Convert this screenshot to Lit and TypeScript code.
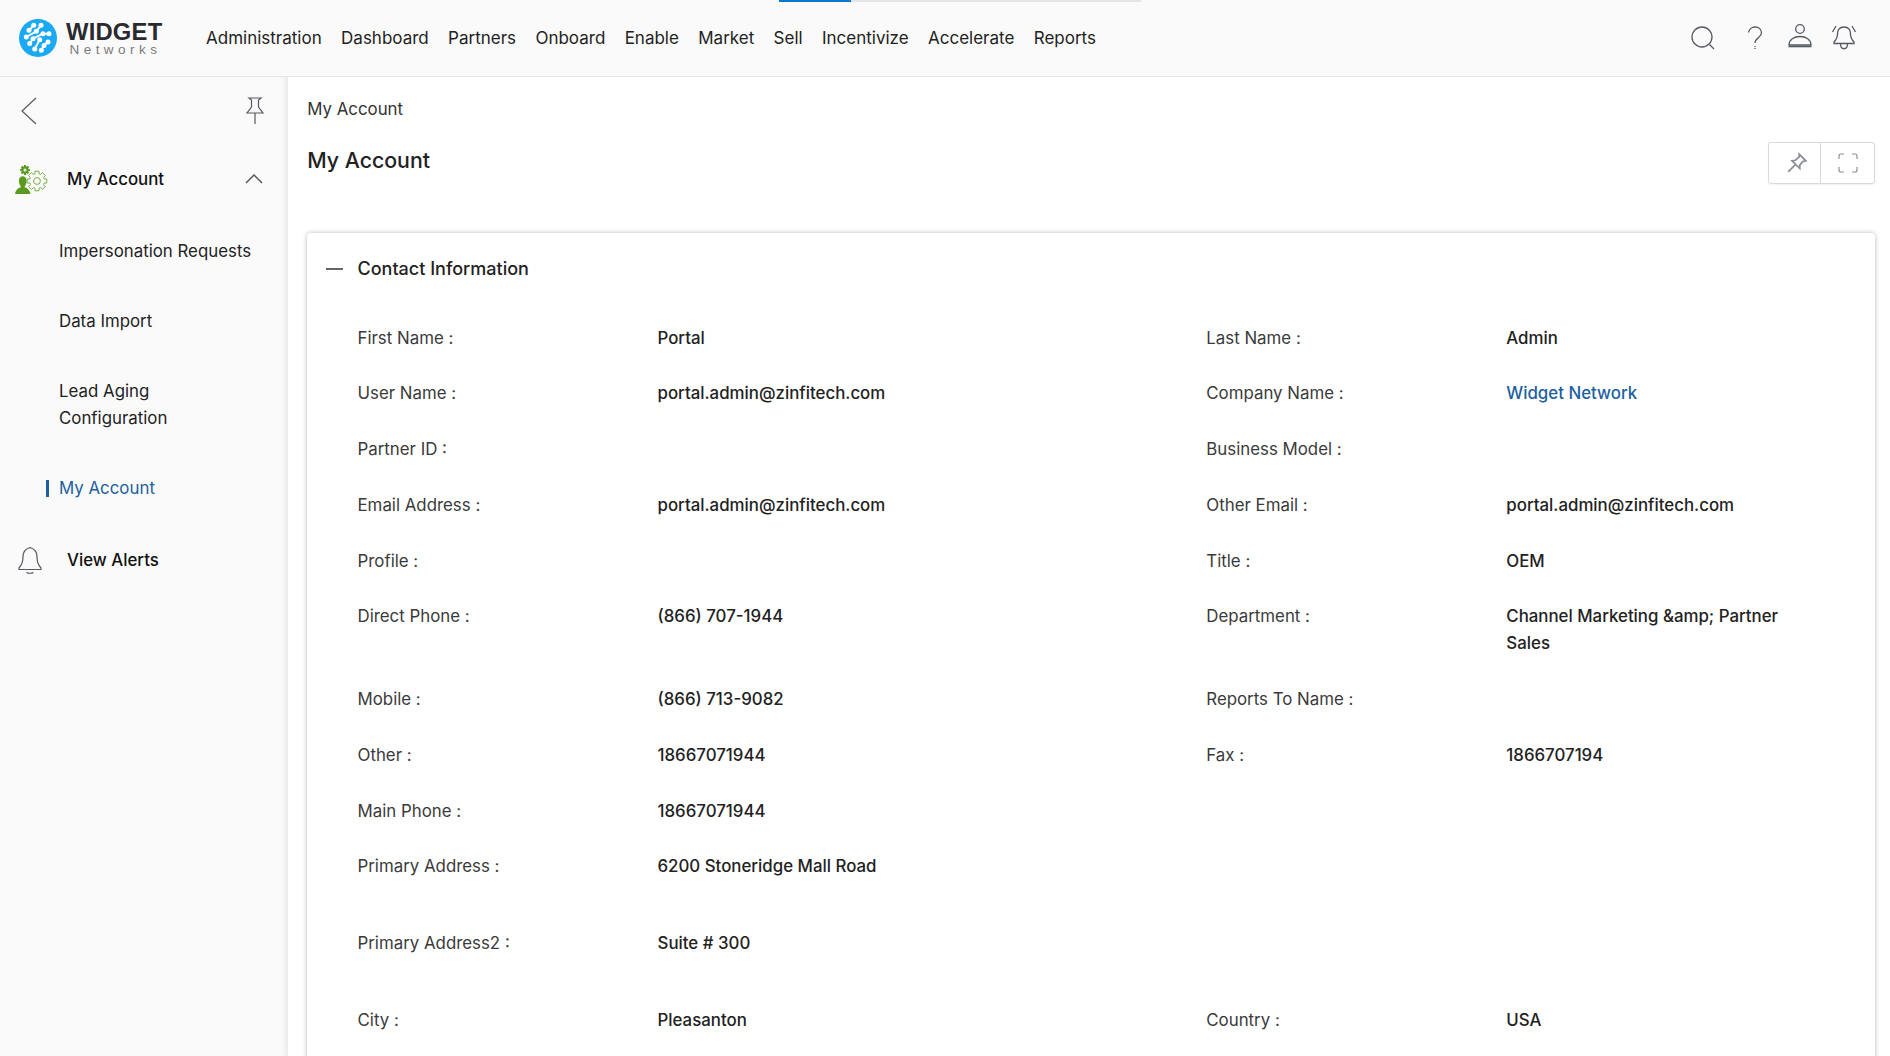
import { LitElement, html, css, svg } from "lit";
import { customElement } from "lit/decorators.js";

type Row = { l1: string; v1?: string; l2?: string; v2?: string; link?: boolean; cls?: string };

const rows: Row[] = [
  { l1: "First Name :", v1: "Portal", l2: "Last Name :", v2: "Admin" },
  { l1: "User Name :", v1: "portal.admin@zinfitech.com", l2: "Company Name :", v2: "Widget Network", link: true },
  { l1: "Partner ID :", l2: "Business Model :" },
  { l1: "Email Address :", v1: "portal.admin@zinfitech.com", l2: "Other Email :", v2: "portal.admin@zinfitech.com" },
  { l1: "Profile :", l2: "Title :", v2: "OEM" },
  { l1: "Direct Phone :", v1: "(866) 707-1944", l2: "Department :", v2: "Channel Marketing &amp; Partner Sales" },
  { l1: "Mobile :", v1: "(866) 713-9082", l2: "Reports To Name :" },
  { l1: "Other :", v1: "18667071944", l2: "Fax :", v2: "1866707194" },
  { l1: "Main Phone :", v1: "18667071944" },
  { l1: "Primary Address :", v1: "6200 Stoneridge Mall Road", cls: "tall" },
  { l1: "Primary Address2 :", v1: "Suite # 300", cls: "tall" },
  { l1: "City :", v1: "Pleasanton", l2: "Country :", v2: "USA" },
];

const nav = ["Administration", "Dashboard", "Partners", "Onboard", "Enable", "Market", "Sell", "Incentivize", "Accelerate", "Reports"];

const dots: [number, number][] = [
  [14.7, 6.3], [22, 6.3], [10, 11.3], [17.3, 12.3], [24, 14.7], [30, 14.7], [7.3, 18],
  [14, 19.7], [20.7, 20.7], [29, 23], [10.7, 24.5], [15.7, 30], [22.3, 31.3], [25, 26.5],
];

const logo = svg`<svg class="logo" viewBox="0 0 38 38" width="38" height="38">
  <circle cx="19" cy="19" r="19" fill="#1aa9f2"/>
  <g stroke="#fff" stroke-width="1.9" fill="none" stroke-linecap="round" stroke-linejoin="round">
    <path d="M10 11.3 L14.7 6.3 M7.3 18 L17.3 12.3 L22 6.3 M10.7 24.5 L14 19.7 L24 14.7 L30 14.7 M15.7 30 L20.7 20.7 M22.3 31.3 L25 26.5 L29 23"/>
  </g>
  <g fill="#fff">${dots.map(([x, y]) => svg`<circle cx="${x}" cy="${y}" r="2.5"/>`)}</g>
</svg>`;

const gearPath = (cx: number, cy: number, r: number) => {
  const pts: string[] = [];
  for (let i = 0; i < 8; i++) {
    const a = (i * Math.PI) / 4;
    const w = 0.2;
    const p = (rad: number, t: number) => `${(cx + rad * Math.cos(t)).toFixed(2)} ${(cy + rad * Math.sin(t)).toFixed(2)}`;
    pts.push(`${i === 0 ? "M" : "L"}${p(r * 0.74, a - w * 1.5)} L${p(r, a - w)} L${p(r, a + w)} L${p(r * 0.74, a + w * 1.5)}`);
  }
  return pts.join(" ") + " Z";
};

@customElement("app-root")
export class AppRoot extends LitElement {
  static styles = css`
    :host {
      display: block;
      height: 100vh;
      overflow: hidden;
      background: #fff;
      font-family: Inter, "Liberation Sans", sans-serif;
      font-size: 16.85px;
      color: #222;
    }
    .header {
      position: relative;
      height: 76px;
      display: flex;
      align-items: center;
      background: #fafafa;
      border-bottom: 1px solid #e3e6ec;
      padding: 0 0 0 19px;
    }
    .progress {
      position: absolute;
      left: 779px;
      top: 0;
      width: 362px;
      height: 2px;
      background: #e4e4e4;
    }
    .progress i {
      display: block;
      width: 72px;
      height: 2px;
      background: #0a78cf;
    }
    .brand {
      display: flex;
      align-items: center;
      gap: 9px;
      width: 187px;
      flex: none;
    }
    .brand-text {
      display: flex;
      flex-direction: column;
    }
    .brand-name {
      font-family: "Liberation Sans", sans-serif;
      font-weight: 700;
      font-size: 23.8px;
      line-height: 24px;
      letter-spacing: 0.2px;
      color: #2a2a2e;
    }
    .brand-sub {
      font-family: "Liberation Sans", sans-serif;
      font-size: 13.5px;
      line-height: 12px;
      letter-spacing: 4.45px;
      color: #7a7a7e;
      margin-left: 3.5px;
    }
    .nav {
      display: flex;
      gap: 19.35px;
      flex: 1;
      font-size: 17px;
      color: #222;
    }
    .actions {
      display: flex;
      align-items: center;
      margin-right: 33px;
    }
    .actions svg {
      display: block;
      fill: none;
      stroke: #555a60;
      stroke-width: 1.3;
    }
    .a-search { margin-right: 32px; }
    .a-help { margin-right: 24px; }
    .a-user { margin-right: 18px; margin-bottom: 2px; }

    .body {
      display: flex;
      height: calc(100vh - 77px);
    }
    .side {
      width: 288px;
      flex: none;
      background: #fafafa;
      box-shadow: inset -5px 0 5px -3px rgba(40, 60, 100, 0.1);
      padding: 0 21px 0 0;
      box-sizing: border-box;
    }
    .side-top {
      display: flex;
      justify-content: space-between;
      padding: 20px 3px 0 21px;
      height: 47px;
    }
    .side svg.line {
      fill: none;
      stroke: #555a60;
      stroke-width: 1.2;
      display: block;
    }
    .group {
      display: flex;
      align-items: center;
      height: 40px;
      margin-top: 15px;
      font-weight: 500;
      color: #111;
      padding-left: 15px;
    }
    .group .ico {
      width: 52px;
      flex: none;
      display: flex;
    }
    .group .lbl { flex: 1; }
    .chev { margin-right: 4px; stroke-width: 1.5 !important; }
    .sub {
      padding-left: 59px;
      line-height: 27px;
      color: #222;
      margin-bottom: 43px;
    }
    .subs { padding-top: 39px; }
    .sub.active {
      position: relative;
      color: #1d5f9f;
      margin-bottom: 0;
    }
    .sub.active::before {
      content: "";
      position: absolute;
      left: 46px;
      top: 5px;
      width: 3px;
      height: 17px;
      background: #1d5f9f;
    }
    .group.alerts { margin-top: 38px; padding-left: 18px; }
    .alerts .ico { width: 49px; }

    .main {
      flex: 1;
      min-width: 0;
      padding: 19px 15px 0 18.5px;
      overflow: hidden;
    }
    .crumb {
      line-height: 27px;
      color: #333;
      padding-left: 0.7px;
    }
    .titlebar {
      display: flex;
      justify-content: space-between;
      align-items: flex-start;
      height: 94.5px;
      margin-top: 15px;
      padding-left: 0.7px;
    }
    h1 {
      margin: 6px 0 0;
      font-size: 21.3px;
      font-weight: 500;
      line-height: 32px;
      color: #222;
    }
    .btns {
      display: flex;
      margin-top: 4px;
      height: 42px;
      border: 1px solid #d5d9e0;
      border-radius: 3px;
      box-sizing: border-box;
      box-shadow: 0 1px 2px rgba(0, 0, 0, 0.06);
    }
    .btns div {
      display: flex;
      align-items: center;
      justify-content: center;
    }
    .btns div:first-child {
      width: 51px;
      border-right: 1px solid #d5d9e0;
    }
    .btns div:first-child svg { margin-left: 5px; }
    .btns div:last-child { width: 53px; }
    .card {
      border-radius: 4px;
      box-shadow: 0 0 5px rgba(0, 0, 0, 0.28);
      padding: 22px 70px 60px 19.5px;
      background: #fff;
    }
    .card-head {
      display: flex;
      align-items: center;
      font-size: 18px;
      font-weight: 500;
      line-height: 28px;
      color: #222;
      margin-bottom: 42px;
    }
    .dash {
      width: 17px;
      height: 2px;
      background: #666;
      margin-right: 14.5px;
    }
    .grid {
      display: grid;
      grid-template-columns: 300px 548.8px 300px 1fr;
      row-gap: 28.75px;
      line-height: 27px;
      padding-left: 31.5px;
    }
    .lab { color: #3a3a3a; }
    .val { font-weight: 500; color: #222; }
    .val a { color: #1d5f9f; text-decoration: none; }
    .tall { min-height: 48px; }
  `;

  render() {
    return html`
      <div class="header">
        <div class="progress"><i></i></div>
        <div class="brand">
          ${logo}
          <div class="brand-text">
            <span class="brand-name">WIDGET</span>
            <span class="brand-sub">Networks</span>
          </div>
        </div>
        <div class="nav">${nav.map((n) => html`<span>${n}</span>`)}</div>
        <div class="actions">
          <svg class="a-search" width="24" height="24" viewBox="0 0 24 24"><circle cx="11" cy="11" r="10"/><path d="M18.5 18.5 L23 23"/></svg>
          <svg class="a-help" width="16" height="24" viewBox="0 0 16 24"><path d="M1.5 6.5 C2 3 5 1 8 1 C12 1 14.5 3.5 14.5 7 C14.5 11 8 12 8 17"/><path d="M8 20 V23" stroke-dasharray="1 1"/></svg>
          <svg class="a-user" width="26" height="26" viewBox="0 0 26 26"><circle cx="13" cy="5" r="4.3"/><path d="M2 21 C2 15.5 7 12.5 13 12.5 C19 12.5 24 15.5 24 21 Z"/><path d="M1.5 22.5 H24.5" stroke-width="1.6"/></svg>
          <svg class="a-bell" width="26" height="26" viewBox="0 0 26 26"><path d="M13 2 C8 2 6.5 5.5 6.5 9 C6.5 13 5 15 3 17 V18.5 H23 V17 C21 15 19.5 13 19.5 9 C19.5 5.5 18 2 13 2 Z"/><path d="M9.5 18.5 C9.5 25.5 16.5 25.5 16.5 18.5"/><path d="M5 1 L1.5 7 M21 1 L24.5 7"/></svg>
        </div>
      </div>
      <div class="body">
        <aside class="side">
          <div class="side-top">
            <svg class="line" width="16" height="28" viewBox="0 0 16 28"><path d="M15 1 L1 14 L15 27"/></svg>
            <svg class="line" width="18" height="28" viewBox="0 0 18 28"><path d="M3 1 H15 L12.5 3 V10 L17 16 H1 L5.5 10 V3 Z M9 16 V27"/></svg>
          </div>
          <div class="group">
            <span class="ico">
              <svg width="33" height="30" viewBox="0 0 33 30">
                <path d="${gearPath(10, 6, 5)}" fill="#5a9a1f"/>
                <circle cx="10" cy="6" r="1.5" fill="#fafafa"/>
                <path d="${gearPath(22, 17, 10)}" fill="none" stroke="#6aa62c" stroke-width="0.9"/>
                <circle cx="22" cy="17" r="3.4" fill="none" stroke="#6aa62c" stroke-width="0.9"/>
                <path d="M0 30 C1 25 4 24 6 23 C5 21 3.5 19 4 16 C4.5 11 11 11 11.5 16 C12 19 10.5 21 9.5 23 C11.5 24 14.5 25 15.5 30 Z" fill="#5a9a1f"/>
              </svg>
            </span>
            <span class="lbl">My Account</span>
            <svg class="line chev" width="18" height="10" viewBox="0 0 18 10"><path d="M1 9 L9 1 L17 9"/></svg>
          </div>
          <div class="subs">
            <div class="sub">Impersonation Requests</div>
            <div class="sub">Data Import</div>
            <div class="sub">Lead Aging<br />Configuration</div>
            <div class="sub active">My Account</div>
          </div>
          <div class="group alerts">
            <span class="ico">
              <svg class="line" width="24" height="28" viewBox="0 0 24 28"><path d="M12 1.5 C7 3 5 7 5 11 C5 16 4 19 1 22 V23.5 H23 V22 C20 19 19 16 19 11 C19 7 17 3 12 1.5 Z"/><path d="M8.5 26.5 C10 27.5 14 27.5 15.5 26.5"/></svg>
            </span>
            <span class="lbl">View Alerts</span>
          </div>
        </aside>
        <main class="main">
          <div class="crumb">My Account</div>
          <div class="titlebar">
            <h1>My Account</h1>
            <div class="btns">
              <div>
                <svg width="22" height="22" viewBox="0 0 20 20" fill="none" stroke="#8a8f96" stroke-width="1.6"><path d="M12 2 L18 8 L15.5 8.5 L12.5 12 L12.5 15 L5.5 8 L8.5 7.5 L12 4.5 Z M8.5 11.5 L2 18"/></svg>
              </div>
              <div>
                <svg width="20" height="20" viewBox="0 0 20 20" fill="none" stroke="#8a8f96" stroke-width="1.2"><path d="M1 6 V3 Q1 1 3 1 H6 M14 1 H17 Q19 1 19 3 V6 M19 14 V17 Q19 19 17 19 H14 M6 19 H3 Q1 19 1 17 V14"/></svg>
              </div>
            </div>
          </div>
          <section class="card">
            <div class="card-head"><span class="dash"></span>Contact Information</div>
            <div class="grid">
              ${rows.map(
                (r) => html`
                  <div class="lab ${r.cls ?? ""}">${r.l1}</div>
                  <div class="val">${r.v1 ?? ""}</div>
                  <div class="lab">${r.l2 ?? ""}</div>
                  <div class="val">${r.link ? html`<a href="#">${r.v2}</a>` : r.v2 ?? ""}</div>
                `
              )}
            </div>
          </section>
        </main>
      </div>
    `;
  }
}
